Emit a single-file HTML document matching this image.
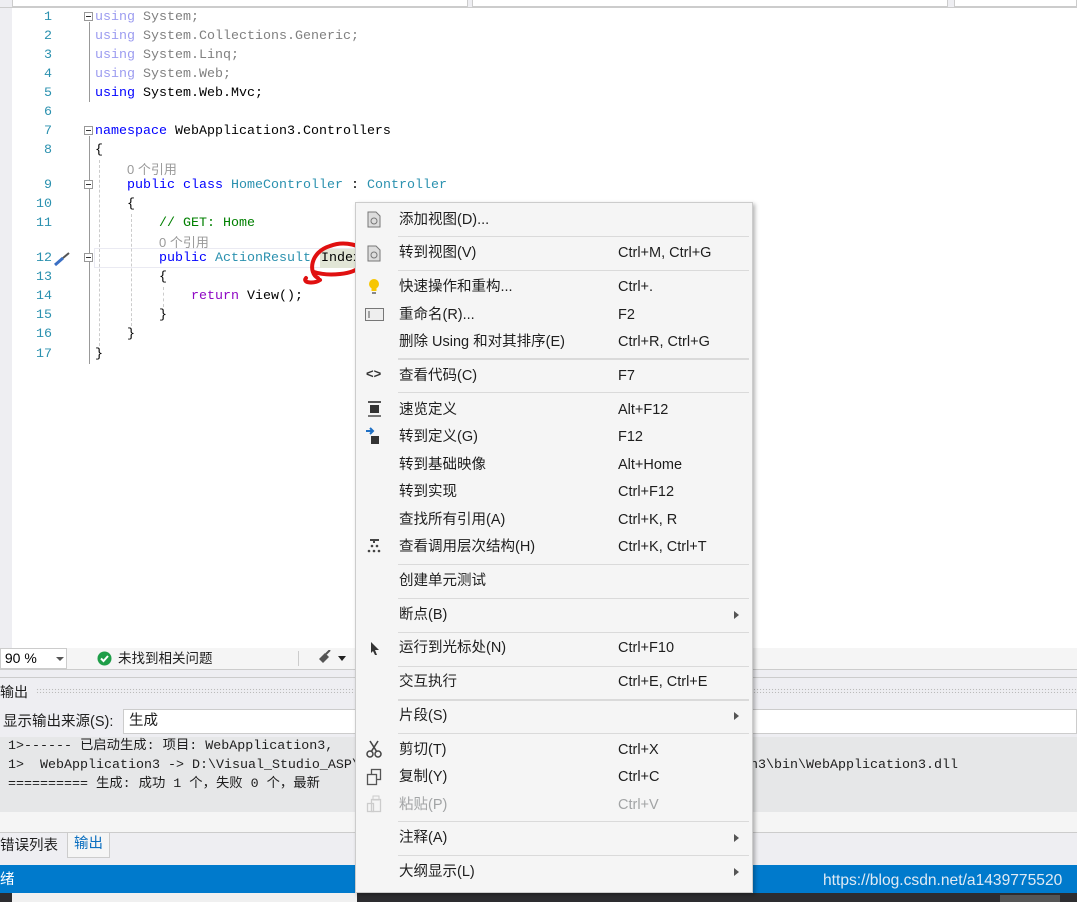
<!DOCTYPE html>
<html><head><meta charset="utf-8"><style>
*{margin:0;padding:0;box-sizing:border-box}
body{width:1077px;height:902px;overflow:hidden;position:relative;background:#fff;font-family:"Liberation Sans","Noto Sans CJK SC",sans-serif}
.a{position:absolute;white-space:pre}
.m{font-family:"Liberation Mono","Noto Sans CJK SC",monospace;font-size:13.33px;line-height:19px}
.ln{position:absolute;width:52px;text-align:right;color:#2b91af;left:0}
.k{color:#0000ff}.kg{color:#9c9cf0}.g{color:#808080}.t{color:#2b91af}.c{color:#008000}.r{color:#8f08c4}.cl{color:#999;font-family:"Liberation Sans","Noto Sans CJK SC",sans-serif;font-size:13px}
.box{position:absolute;width:9px;height:9px;border:1px solid #999;background:#fff}
.box:after{content:"";position:absolute;left:1px;top:3px;width:5px;height:1px;background:#333}
.vl{position:absolute;width:1px;background:#999}
.dl{position:absolute;width:0;border-left:1px dashed #ccc}
.menu{position:absolute;left:355px;top:202px;width:398px;height:691px;background:#f5f5f5;border:1px solid #ccc;box-shadow:2px 2px 4px rgba(0,0,0,.3);font-size:14.5px;color:#1e1e1e}
.mi{position:absolute;left:43px;white-space:pre;line-height:20px}
.sc{position:absolute;left:262px;white-space:pre;line-height:20px}
.sep{position:absolute;left:42px;width:351px;height:1px;background:#dadada}
.arr{position:absolute;left:378px;width:0;height:0;border-left:5px solid #555;border-top:4px solid transparent;border-bottom:4px solid transparent}
</style></head><body>
<div class="a" style="left:0;top:0;width:1077px;height:8px;background:#eeeef2;border-bottom:1px solid #ccc"></div>
<div class="a" style="left:12px;top:0;width:456px;height:7px;background:#fff;border:1px solid #ccc;border-top:0"></div>
<div class="a" style="left:472px;top:0;width:476px;height:7px;background:#fff;border:1px solid #ccc;border-top:0"></div>
<div class="a" style="left:954px;top:0;width:123px;height:7px;background:#fff;border:1px solid #ccc;border-top:0"></div>
<div class="a" style="left:0;top:8px;width:12px;height:640px;background:#eeeef2"></div>
<div class="a" style="left:94px;top:248px;width:262px;height:20px;border:1px solid #eaeaf2"></div>
<div class="m">
<div class="ln" style="top:8px">1</div><div class="ln" style="top:27px">2</div><div class="ln" style="top:46px">3</div><div class="ln" style="top:65px">4</div><div class="ln" style="top:84px">5</div><div class="ln" style="top:103px">6</div><div class="ln" style="top:122px">7</div><div class="ln" style="top:141px">8</div><div class="ln" style="top:176px">9</div><div class="ln" style="top:195px">10</div><div class="ln" style="top:214px">11</div><div class="ln" style="top:249px">12</div><div class="ln" style="top:268px">13</div><div class="ln" style="top:287px">14</div><div class="ln" style="top:306px">15</div><div class="ln" style="top:325px">16</div><div class="ln" style="top:345px">17</div>
<div class="a" style="left:95px;top:8px"><span class="kg">using</span> <span class="g">System;</span></div>
<div class="a" style="left:95px;top:27px"><span class="kg">using</span> <span class="g">System.Collections.Generic;</span></div>
<div class="a" style="left:95px;top:46px"><span class="kg">using</span> <span class="g">System.Linq;</span></div>
<div class="a" style="left:95px;top:65px"><span class="kg">using</span> <span class="g">System.Web;</span></div>
<div class="a" style="left:95px;top:84px"><span class="k">using</span> System.Web.Mvc;</div>
<div class="a" style="left:95px;top:122px"><span class="k">namespace</span> WebApplication3.Controllers</div>
<div class="a" style="left:95px;top:141px">{</div>
<div class="a cl" style="left:127px;top:160px">0 个引用</div>
<div class="a" style="left:127px;top:176px"><span class="k">public</span> <span class="k">class</span> <span class="t">HomeController</span> : <span class="t">Controller</span></div>
<div class="a" style="left:127px;top:195px">{</div>
<div class="a" style="left:159px;top:214px"><span class="c">// GET: Home</span></div>
<div class="a cl" style="left:159px;top:233px">0 个引用</div>
<div class="a" style="left:159px;top:249px"><span class="k">public</span> <span class="t">ActionResult</span></div>
<div class="a" style="left:320px;top:249px;background:#e2e6d6;padding:0 1px;height:19px;width:36px;overflow:hidden">Index</div>
<div class="a" style="left:159px;top:268px">{</div>
<div class="a" style="left:191px;top:287px"><span class="r">return</span> View();</div>
<div class="a" style="left:159px;top:306px">}</div>
<div class="a" style="left:127px;top:325px">}</div>
<div class="a" style="left:95px;top:345px">}</div>
</div>
<div class="box" style="left:84px;top:12px"></div>
<div class="vl" style="left:89px;top:22px;height:80px"></div>
<div class="box" style="left:84px;top:126px"></div>
<div class="vl" style="left:89px;top:136px;height:228px"></div>
<div class="box" style="left:84px;top:180px"></div>
<div class="box" style="left:84px;top:253px"></div>
<div class="dl" style="left:99px;top:160px;height:186px"></div>
<div class="dl" style="left:131px;top:214px;height:112px"></div>
<div class="dl" style="left:163px;top:287px;height:20px"></div>
<svg class="a" style="left:53px;top:251px" width="18" height="16"><path d="M2 14 L10 7" stroke="#3a6fc4" stroke-width="3"/><path d="M10 7 L16 2" stroke="#555" stroke-width="2"/></svg>
<svg class="a" style="left:300px;top:238px" width="70" height="50"><path d="M6 40 C 2 45, 14 46, 20 42 M18 40 C 8 35, 10 14, 30 8 C 45 2, 62 8, 66 14 C 68 22, 62 34, 40 36 C 30 37, 20 36, 14 34" fill="none" stroke="#e01010" stroke-width="4" stroke-linecap="round"/></svg>
<div class="a" style="left:0;top:648px;width:1077px;height:22px;background:#f5f5f5;border-bottom:1px solid #ccc"></div>
<div class="a" style="left:0;top:648px;width:67px;height:21px;background:#fff;border:1px solid #ccc;font-size:14px;line-height:19px"> 90 %</div>
<div class="a" style="left:56px;top:657px;border-left:4px solid transparent;border-right:4px solid transparent;border-top:4px solid #555"></div>
<svg class="a" style="left:97px;top:651px" width="15" height="15"><circle cx="7.5" cy="7.5" r="7" fill="#1e9e48"/><path d="M4 7.5 L6.5 10 L11 5" stroke="#fff" stroke-width="2" fill="none"/></svg>
<div class="a" style="left:118px;top:650px;font-size:13.5px;line-height:18px;color:#1e1e1e">未找到相关问题</div>
<div class="a" style="left:298px;top:651px;width:1px;height:15px;background:#ccc"></div>
<svg class="a" style="left:316px;top:650px" width="16" height="16"><path d="M3 9 L9 3 L13 7 L7 13 Z" fill="#555"/><path d="M10 4 L14 0" stroke="#555" stroke-width="2"/></svg>
<div class="a" style="left:338px;top:656px;border-left:4px solid transparent;border-right:4px solid transparent;border-top:5px solid #222"></div>
<div class="a" style="left:0;top:670px;width:1077px;height:195px;background:#eeeef2"></div>
<div class="a" style="left:0;top:677px;width:1077px;height:1px;background:#ccc"></div>
<div class="a" style="left:0;top:682px;font-size:14px;line-height:20px;color:#1e1e1e">输出</div>
<div class="a" style="left:36px;top:688px;width:1041px;height:5px;background-image:radial-gradient(#bbb 0.7px,transparent 0.8px);background-size:3px 3px"></div>
<div class="a" style="left:3px;top:711px;font-size:14.5px;line-height:22px;color:#1e1e1e">显示输出来源(S):</div>
<div class="a" style="left:123px;top:709px;width:954px;height:25px;background:#fff;border:1px solid #ccc;font-size:14.5px;line-height:23px;padding-left:5px;color:#1e1e1e">生成</div>
<div class="a" style="left:0;top:737px;width:1077px;height:75px;background:#e6e7e8"></div>
<div class="a m" style="left:8px;top:737px;color:#1e1e1e">1>------ 已启动生成: 项目: WebApplication3,
1>  WebApplication3 -> D:\Visual_Studio_ASP\
========== 生成: 成功 1 个，失败 0 个，最新</div>
<div class="a m" style="left:750px;top:756px;color:#1e1e1e">n3\bin\WebApplication3.dll</div>
<div class="a" style="left:0;top:812px;width:1077px;height:21px;background:#f5f5f5;border-bottom:1px solid #ccc"></div>
<div class="a" style="left:0;top:836px;font-size:14.5px;line-height:20px;color:#1e1e1e">错误列表</div>
<div class="a" style="left:67px;top:833px;width:43px;height:25px;background:#f5f5f5;border:1px solid #ccc;border-top:0;font-size:14.5px;line-height:22px;color:#0e70c0;padding-left:6px">输出</div>
<div class="a" style="left:0;top:865px;width:1077px;height:28px;background:#007acc"></div>
<div class="a" style="left:0;top:870px;font-size:14.5px;line-height:20px;color:#fff">绪</div>
<div class="a" style="left:823px;top:871px;font-size:15.6px;line-height:20px;color:#e0eaf4">https://blog.csdn.net/a1439775520</div>
<div class="a" style="left:0;top:893px;width:1077px;height:9px;background:#2d2d30"></div>
<div class="a" style="left:12px;top:893px;width:345px;height:9px;background:#f0f0f0"></div>
<div class="a" style="left:1000px;top:895px;width:60px;height:7px;background:#555"></div>
<div class="menu">
<svg class="a" style="left:11px;top:8px" width="14" height="17"><path d="M1 1 H9 L13 5 V16 H1 Z" fill="#ddd" stroke="#777"/><circle cx="7" cy="10" r="3" fill="none" stroke="#777"/></svg>
<div class="mi" style="top:7px">添加视图(D)...</div>
<div class="sep" style="top:33px"></div>
<svg class="a" style="left:11px;top:42px" width="14" height="17"><path d="M1 1 H9 L13 5 V16 H1 Z" fill="#ddd" stroke="#777"/><circle cx="7" cy="10" r="3" fill="none" stroke="#777"/></svg>
<div class="mi" style="top:40px">转到视图(V)</div><div class="sc" style="top:40px">Ctrl+M, Ctrl+G</div>
<div class="sep" style="top:67px"></div>
<svg class="a" style="left:12px;top:75px" width="12" height="17"><circle cx="6" cy="6" r="5" fill="#f7c600"/><rect x="3.5" y="10" width="5" height="3" fill="#f7c600"/><rect x="4" y="14" width="4" height="2" fill="#888"/></svg>
<div class="mi" style="top:74px">快速操作和重构...</div><div class="sc" style="top:74px">Ctrl+.</div>
<svg class="a" style="left:9px;top:105px" width="19" height="13"><rect x="0.5" y="0.5" width="18" height="12" fill="#eee" stroke="#777"/><path d="M4 3 V10" stroke="#555"/></svg>
<div class="mi" style="top:102px">重命名(R)...</div><div class="sc" style="top:102px">F2</div>
<div class="mi" style="top:129px">删除 Using 和对其排序(E)</div><div class="sc" style="top:129px">Ctrl+R, Ctrl+G</div>
<div class="sep" style="top:155px;height:2px"></div>
<div class="a" style="left:10px;top:163px;font-size:13px;font-weight:bold;color:#333">&lt;&gt;</div>
<div class="mi" style="top:163px">查看代码(C)</div><div class="sc" style="top:163px">F7</div>
<div class="sep" style="top:189px"></div>
<svg class="a" style="left:11px;top:198px" width="16" height="18"><rect x="1" y="0" width="13" height="2" fill="#555"/><rect x="3" y="4" width="9" height="8" fill="#333"/><rect x="1" y="14" width="13" height="2" fill="#777"/></svg>
<div class="mi" style="top:197px">速览定义</div><div class="sc" style="top:197px">Alt+F12</div>
<svg class="a" style="left:9px;top:224px" width="16" height="18"><path d="M1 4 H8 M5 1 L8 4 L5 7" stroke="#1e6fc4" stroke-width="2" fill="none"/><rect x="6" y="9" width="8" height="8" fill="#333"/></svg>
<div class="mi" style="top:224px">转到定义(G)</div><div class="sc" style="top:224px">F12</div>
<div class="mi" style="top:252px">转到基础映像</div><div class="sc" style="top:252px">Alt+Home</div>
<div class="mi" style="top:279px">转到实现</div><div class="sc" style="top:279px">Ctrl+F12</div>
<div class="mi" style="top:307px">查找所有引用(A)</div><div class="sc" style="top:307px">Ctrl+K, R</div>
<svg class="a" style="left:11px;top:335px" width="16" height="16"><path d="M3 2 H12 M7 2 V5" stroke="#444" stroke-width="2"/><circle cx="5" cy="8" r="1.3" fill="#444"/><circle cx="10" cy="8" r="1.3" fill="#444"/><circle cx="2" cy="13" r="1.3" fill="#444"/><circle cx="7" cy="13" r="1.3" fill="#444"/><circle cx="12" cy="13" r="1.3" fill="#444"/></svg>
<div class="mi" style="top:334px">查看调用层次结构(H)</div><div class="sc" style="top:334px">Ctrl+K, Ctrl+T</div>
<div class="sep" style="top:361px"></div>
<div class="mi" style="top:368px">创建单元测试</div>
<div class="sep" style="top:395px"></div>
<div class="mi" style="top:402px">断点(B)</div><div class="arr" style="top:408px"></div>
<div class="sep" style="top:429px"></div>
<svg class="a" style="left:14px;top:438px" width="10" height="15"><path d="M1 1 L9 9 H5 L7 14 L5 14 L3 10 L1 12 Z" fill="#333"/></svg>
<div class="mi" style="top:435px">运行到光标处(N)</div><div class="sc" style="top:435px">Ctrl+F10</div>
<div class="sep" style="top:463px"></div>
<div class="mi" style="top:469px">交互执行</div><div class="sc" style="top:469px">Ctrl+E, Ctrl+E</div>
<div class="sep" style="top:496px;height:2px"></div>
<div class="mi" style="top:503px">片段(S)</div><div class="arr" style="top:509px"></div>
<div class="sep" style="top:530px"></div>
<svg class="a" style="left:10px;top:537px" width="16" height="18"><path d="M4 1 L11 12 M12 1 L5 12" stroke="#444" stroke-width="1.6"/><circle cx="4" cy="14" r="3" fill="none" stroke="#444" stroke-width="1.5"/><circle cx="12" cy="14" r="3" fill="none" stroke="#444" stroke-width="1.5"/></svg>
<div class="mi" style="top:537px">剪切(T)</div><div class="sc" style="top:537px">Ctrl+X</div>
<svg class="a" style="left:10px;top:565px" width="16" height="18"><rect x="5.5" y="1.5" width="9" height="10" fill="none" stroke="#555" stroke-width="1.3"/><rect x="1.5" y="6.5" width="9" height="10" fill="#f5f5f5" stroke="#555" stroke-width="1.3"/></svg>
<div class="mi" style="top:564px">复制(Y)</div><div class="sc" style="top:564px">Ctrl+C</div>
<svg class="a" style="left:10px;top:592px" width="16" height="18"><rect x="5.5" y="4.5" width="9" height="12" fill="none" stroke="#ccc" stroke-width="1.3"/><rect x="1.5" y="8.5" width="6" height="8" fill="none" stroke="#ccc" stroke-width="1.3"/><rect x="7" y="1" width="6" height="4" fill="none" stroke="#ccc"/></svg>
<div class="mi" style="top:592px;color:#a2a4a5">粘贴(P)</div><div class="sc" style="top:592px;color:#a2a4a5">Ctrl+V</div>
<div class="sep" style="top:618px"></div>
<div class="mi" style="top:625px">注释(A)</div><div class="arr" style="top:631px"></div>
<div class="sep" style="top:652px"></div>
<div class="mi" style="top:659px">大纲显示(L)</div><div class="arr" style="top:665px"></div>
</div>
</body></html>
